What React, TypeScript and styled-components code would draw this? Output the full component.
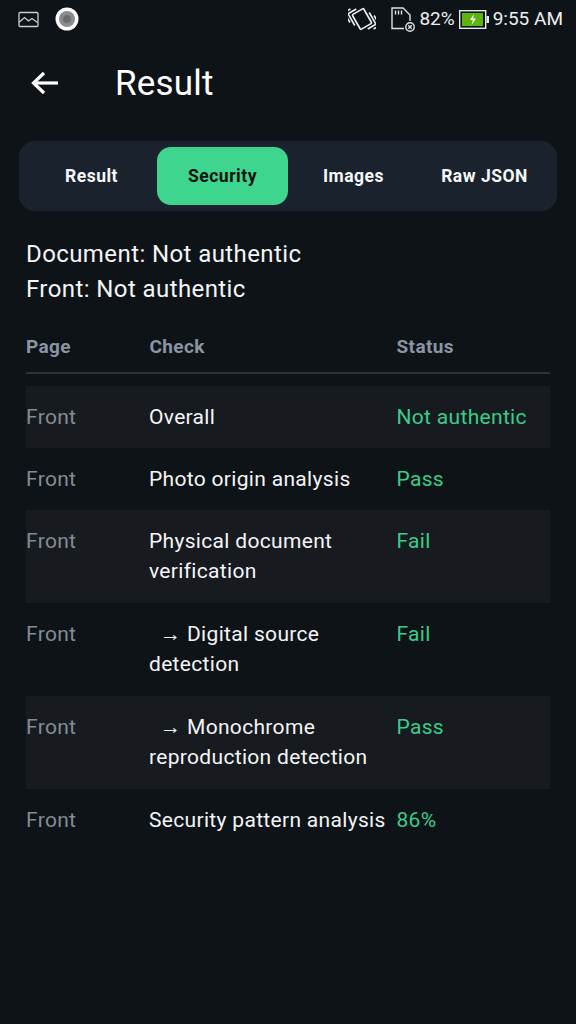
import React from 'react';
import styled, { createGlobalStyle } from 'styled-components';

const Global = createGlobalStyle`
  html, body { margin: 0; padding: 0; background: #0e1318; }
  #root { width: 576px; height: 1024px; overflow: hidden; }
`;

const Screen = styled.div`
  width: 576px;
  height: 1024px;
  background: #0e1318;
  color: #fff;
  font-family: Roboto, "Liberation Sans", sans-serif;
  display: flex;
  flex-direction: column;
`;

const StatusBar = styled.div`
  height: 38px;
  display: flex;
  align-items: center;
  justify-content: space-between;
  padding: 0 13px 0 18px;
  box-sizing: border-box;
`;
const StatusGroup = styled.div`
  display: flex;
  align-items: center;
`;
const StatusText = styled.span<{ $ml: number }>`
  font-size: 19px;
  color: #eceff1;
  margin-left: ${p => p.$ml}px;
  line-height: 38px;
`;
const Svg = styled.svg<{ $ml?: number }>`
  display: block;
  flex: none;
  margin-left: ${p => p.$ml ?? 0}px;
`;

const AppBar = styled.div`
  height: 90px;
  display: flex;
  align-items: center;
  padding: 0 0 0 30px;
`;
const Title = styled.h1`
  margin: 0 0 0 54px;
  font-size: 35px;
  font-weight: 400;
  line-height: 1;
  letter-spacing: 0.2px;
`;

const Tabs = styled.div`
  margin: 13px 19px 0;
  height: 70px;
  border-radius: 16px;
  background: #1a222d;
  display: grid;
  grid-template-columns: repeat(4, 131px);
  padding: 6px 7px;
  box-sizing: border-box;
`;
const Tab = styled.div<{ $active?: boolean }>`
  border-radius: 14px;
  display: flex;
  align-items: center;
  justify-content: center;
  font-size: 17.5px;
  font-weight: 700;
  letter-spacing: 0.5px;
  color: ${p => (p.$active ? '#07120d' : '#f5f7f8')};
  background: ${p => (p.$active ? '#3ed68f' : 'transparent')};
`;

const Summary = styled.div`
  margin: 26px 26px 0;
  font-size: 24px;
  line-height: 35px;
  letter-spacing: 0.41px;
  color: #f4f5f6;
`;

const Table = styled.div`
  margin: 25px 26px 0;
  display: flex;
  flex-direction: column;
`;
const HeaderRow = styled.div`
  display: grid;
  grid-template-columns: 123.5px 247px 1fr;
  height: 36px;
  align-items: start;
  border-bottom: 2px solid #2b323a;
  margin-bottom: 12px;
  font-size: 19px;
  font-weight: 700;
  line-height: 22px;
  letter-spacing: 0.4px;
  color: #8b94a3;
  padding-top: 4px;
`;
const Row = styled.div<{ $shade: boolean; $h: number }>`
  display: grid;
  grid-template-columns: 123.5px 247px 1fr;
  height: ${p => p.$h}px;
  background: ${p => (p.$shade ? '#171b20' : 'transparent')};
  padding-top: 16px;
  box-sizing: border-box;
  font-size: 21px;
  line-height: 30px;
  letter-spacing: 0.32px;
`;
const PageCell = styled.div`
  color: #838b96;
`;
const CheckCell = styled.div`
  color: #f4f5f6;
  padding-right: 8px;
  margin-left: -0.5px;
`;
const CheckLine = styled.div``;
const Arrow = styled.span`
  display: inline-block;
  margin-left: 11px;
  margin-right: 6px;
  letter-spacing: 0;
`;
const StatusCell = styled.div`
  color: #3bcc8a;
`;

type RowData = { lines: string[]; status: string; h: number; arrow?: boolean };

const rows: RowData[] = [
  { lines: ['Overall'], status: 'Not authentic', h: 62 },
  { lines: ['Photo origin analysis'], status: 'Pass', h: 62 },
  { lines: ['Physical document', 'verification'], status: 'Fail', h: 93 },
  { lines: ['Digital source', 'detection'], status: 'Fail', h: 93, arrow: true },
  { lines: ['Monochrome', 'reproduction detection'], status: 'Pass', h: 93, arrow: true },
  { lines: ['Security pattern analysis'], status: '86%', h: 62 },
];

export default function App() {
  return (
    <Screen>
      <Global />
      <StatusBar>
        <StatusGroup>
          <Svg width="21" height="17" viewBox="0 0 21 17" fill="none" stroke="#c9ced2" strokeWidth="1.3">
            <rect x="1" y="1.5" width="19" height="14" rx="1" />
            <path d="M1.5 11 L6.5 6.5 L10.5 10 L14 7.5 L19.5 11.5" />
          </Svg>
          <Svg $ml={16} width="24" height="24" viewBox="0 0 24 24">
            <circle cx="12" cy="12" r="11.5" fill="#fff" />
            <circle cx="12" cy="12" r="8" fill="#8a8c8e" />
            <circle cx="12" cy="12" r="4" fill="#6b6d70" />
          </Svg>
        </StatusGroup>
        <StatusGroup>
          <Svg width="28" height="26" viewBox="0 0 28 26" fill="none" stroke="#eef0f2" strokeWidth="1.6">
            <g transform="rotate(-30 14 13)">
              <rect x="7.5" y="4.5" width="13" height="17" rx="1" />
              <path d="M4.5 15 V2.5 Q4.5 1.5 5.5 1.5 H14" />
              <path d="M1.8 10 V-0.5 Q1.8 -1.5 2.8 -1.5 H9" />
              <path d="M23.5 11 V23.5 Q23.5 24.5 22.5 24.5 H14" />
              <path d="M26.2 16 V26.5 Q26.2 27.5 25.2 27.5 H19" />
            </g>
          </Svg>
          <Svg $ml={14} width="27" height="27" viewBox="0 0 27 27" fill="none" stroke="#dfe3e6" strokeWidth="1.4">
            <path d="M14 22.5 H2 V2 H13 L20 9 V15" />
            <path d="M5.5 4.5 V8.5 M8.5 4.5 V8.5 M11.5 4.5 V8.5" />
            <circle cx="20" cy="21" r="4.2" />
            <path d="M18.3 19.3 L21.7 22.7 M21.7 19.3 L18.3 22.7" />
          </Svg>
          <StatusText $ml={2}>82%</StatusText>
          <Svg $ml={4} width="30" height="19" viewBox="0 0 30 19">
            <rect x="0.7" y="0.7" width="26" height="17.6" fill="none" stroke="#e6e9eb" strokeWidth="1.4" />
            <rect x="3" y="3" width="21" height="13" fill="#5eb30c" />
            <rect x="27.5" y="6" width="2.5" height="7" fill="#e6e9eb" />
            <path d="M15 4 L11 10 H14 L12.5 15 L17 8.5 H14 Z" fill="#fff" />
          </Svg>
          <StatusText $ml={4}>9:55 AM</StatusText>
        </StatusGroup>
      </StatusBar>

      <AppBar>
        <Svg width="31" height="26" viewBox="0 0 31 26" fill="none" stroke="#fff" strokeWidth="3.2">
          <path d="M28 13 H4" />
          <path d="M14 3 L3.5 13 L14 23" />
        </Svg>
        <Title>Result</Title>
      </AppBar>

      <Tabs>
        <Tab>Result</Tab>
        <Tab $active>Security</Tab>
        <Tab>Images</Tab>
        <Tab>Raw JSON</Tab>
      </Tabs>

      <Summary>
        <div>Document: Not authentic</div>
        <div>Front: Not authentic</div>
      </Summary>

      <Table>
        <HeaderRow>
          <div>Page</div>
          <div>Check</div>
          <div>Status</div>
        </HeaderRow>
        {rows.map((r, i) => (
          <Row key={i} $shade={i % 2 === 0} $h={r.h}>
            <PageCell>Front</PageCell>
            <CheckCell>
              {r.lines.map((line, j) => (
                <CheckLine key={j}>
                  {r.arrow && j === 0 && <Arrow>→</Arrow>}
                  {line}
                </CheckLine>
              ))}
            </CheckCell>
            <StatusCell>{r.status}</StatusCell>
          </Row>
        ))}
      </Table>
    </Screen>
  );
}
